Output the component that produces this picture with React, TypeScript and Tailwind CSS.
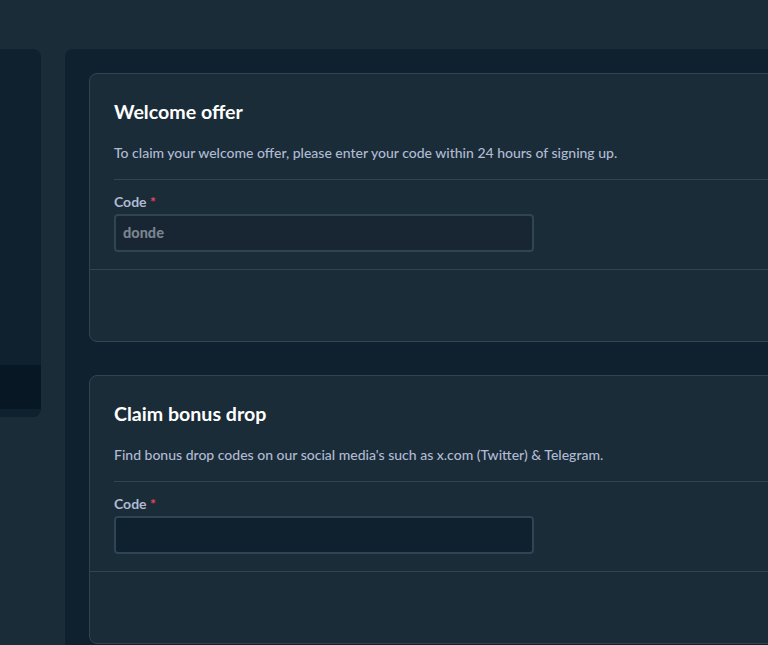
import React from "react";

function Card({ title, desc, value }: { title: string; desc: string; value?: string }) {
  return (
    <div className="rounded-lg border border-[#2f4553] bg-[#1a2c38]">
      <div className="px-6 pt-6">
        <h2 className="text-[19.6px] leading-[28px] font-bold text-white">{title}</h2>
        <p className="mt-[17px] text-[14px] leading-[20px] font-medium text-[#b1bad3]">{desc}</p>
        <div className="mt-4 h-px bg-[#2f4553]" />
      </div>
      <div className="px-6 pt-3 pb-[17px]">
        <label className="block text-[14px] leading-[20px] font-bold text-[#b1bad3]">
          Code <span className="text-[#ed4163]">*</span>
        </label>
        <div
          className={
            value
              ? "mt-[2px] h-[38px] w-[420px] rounded border-2 border-[#2f4553] bg-[#172632] px-[7px] flex items-center text-[14.5px] font-black text-[#7a838e]"
              : "mt-[2px] h-[38px] w-[420px] rounded border-2 border-[#2f4553] bg-[#0f212e] px-[7px] flex items-center text-[14px] font-bold text-white"
          }
        >
          {value}
        </div>
      </div>
      <div className="h-px bg-[#2f4553]" />
      <div className="h-[71px]" />
    </div>
  );
}

export default function App() {
  return (
    <div
      className="h-[645px] w-[768px] overflow-hidden bg-[#1a2c38]"
      style={{ fontFamily: "Lato, 'Open Sans', sans-serif" }}
    >
      <div className="flex gap-6 pt-[49px] h-full">
        <div className="w-[41px] h-[368px] shrink-0 rounded-r-lg bg-[#0f212e] flex flex-col">
          <div className="h-[316px]" />
          <div className="h-[44px] bg-[#071824]" />
        </div>
        <div className="flex-1 rounded-tl-lg bg-[#0f212e] pl-6 pt-6 flex flex-col gap-[33px] min-w-0">
          <div className="-mr-10">
            <Card
              title="Welcome offer"
              desc="To claim your welcome offer, please enter your code within 24 hours of signing up."
              value="donde"
            />
          </div>
          <div className="-mr-10">
            <Card
              title="Claim bonus drop"
              desc="Find bonus drop codes on our social media's such as x.com (Twitter) & Telegram."
            />
          </div>
        </div>
      </div>
    </div>
  );
}
